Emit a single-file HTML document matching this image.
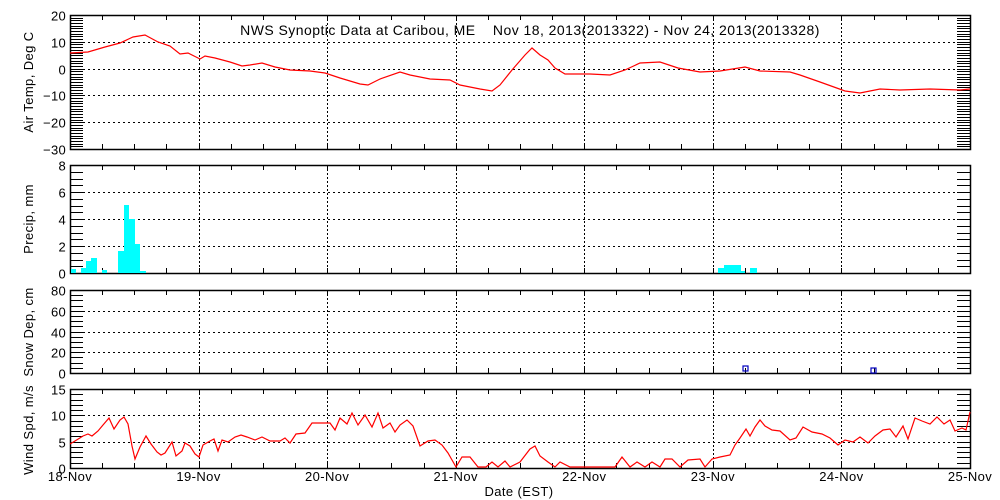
<!DOCTYPE html>
<html><head><meta charset="utf-8"><style>
html,body{margin:0;padding:0;background:#fff;}
svg{display:block;font-family:"Liberation Sans",sans-serif;}
text{fill:#000;}
</style></head><body>
<svg id="s" width="1000" height="500" viewBox="0 0 1000 500" xmlns="http://www.w3.org/2000/svg">
<g id="ax"></g>
<g fill="#00ffff">
<rect x="71" y="269" width="5" height="4"/>
<rect x="81" y="268" width="5" height="5"/>
<rect x="86" y="261" width="5" height="12"/>
<rect x="91" y="258" width="6" height="15"/>
<rect x="102" y="270" width="5" height="3"/>
<rect x="118" y="251" width="6" height="22"/>
<rect x="124" y="205" width="5" height="68"/>
<rect x="129" y="219" width="6" height="54"/>
<rect x="135" y="244" width="5" height="29"/>
<rect x="140" y="271" width="6" height="2"/>
<rect x="718" y="268" width="6" height="5"/>
<rect x="724" y="265" width="17" height="8"/>
<rect x="741" y="271" width="4" height="2"/>
<rect x="750" y="268" width="7" height="5"/>
</g>
<polyline fill="none" stroke="#ff0000" stroke-width="1.2" points="70,53 88,52 105,47 120,43 133,37 145,35 158,42 170,46 180,54 188,53 200,59 205,56 215,58 230,62 242,66 250,65 262,63 275,67 290,70 310,71 325,73 340,78 360,84 368,85 380,79 400,72 410,75 430,79 450,80 460,85 480,89 492,91 500,85 512,70 525,55 532,48 540,55 548,60 555,68 565,74 590,74 610,75 625,70 640,63 660,62 678,68 700,72 720,71 745,67 760,71 790,72 800,75 820,82 845,91 860,93 880,89 900,90 930,89 960,90 970,89"/>
<polyline fill="none" stroke="#ff0000" stroke-width="1.2" points="70,444 75,441 83,436 88,434 92,436 98,431 103,425 109,418 114,429 120,420 124,417 128,424 132,446 135,459 140,447 146,436 151,444 157,452 161,455 165,453 172,442 176,456 182,451 185,443 190,446 195,454 199,457 203,445 210,441 214,439 218,451 222,440 228,442 235,437 241,435 247,437 255,440 262,437 270,441 280,441 285,438 290,443 296,434 305,433 312,423 320,423 330,423 335,430 340,418 347,424 352,413 358,425 365,415 372,427 378,413 383,428 390,423 395,432 400,425 407,420 413,426 420,446 428,441 435,440 442,445 448,453 456,467 462,457 470,457 478,467 486,467 492,462 498,467 505,461 510,467 520,462 530,449 535,446 540,456 548,462 555,467 560,462 570,467 590,467 615,467 622,457 630,467 637,462 645,467 652,462 660,467 665,459 672,459 680,467 688,460 700,459 705,467 712,459 720,457 730,455 735,445 740,438 746,429 750,436 755,427 760,420 765,426 772,430 780,431 790,440 796,438 803,427 812,432 822,434 830,438 838,445 845,440 853,442 860,437 868,443 875,436 883,430 890,429 896,437 903,426 908,439 915,418 922,421 930,424 937,417 944,424 950,420 955,431 962,428 966,430 970,412"/>
<rect x="743" y="366" width="5" height="5" fill="none" stroke="#0000c0" stroke-width="1.2"/>
<rect x="871" y="368" width="5" height="5" fill="none" stroke="#0000c0" stroke-width="1.2"/>
<text x="530" y="35" font-size="14" letter-spacing="0.45" text-anchor="middle" xml:space="preserve">NWS Synoptic Data at Caribou, ME    Nov 18, 2013(2013322) - Nov 24, 2013(2013328)</text>
<text x="519" y="496" font-size="13" letter-spacing="0.4" text-anchor="middle">Date (EST)</text>
<text transform="translate(33,82) rotate(-90)" font-size="13" letter-spacing="0.4" text-anchor="middle">Air Temp, Deg C</text>
<text transform="translate(33,219) rotate(-90)" font-size="13" letter-spacing="0.4" text-anchor="middle">Precip, mm</text>
<text transform="translate(33,332) rotate(-90)" font-size="13" letter-spacing="0.4" text-anchor="middle">Snow Dep, cm</text>
<text transform="translate(33,430) rotate(-90)" font-size="13" letter-spacing="0.4" text-anchor="middle">Wind Spd, m/s</text>
</svg>
<script>
var NS="http://www.w3.org/2000/svg",g=document.getElementById('ax');
function el(t,a,txt){var e=document.createElementNS(NS,t);for(var k in a)e.setAttribute(k,a[k]);if(txt!=null)e.textContent=txt;g.appendChild(e);return e;}
function L(x1,y1,x2,y2,dash){el('line',{x1:x1,y1:y1,x2:x2,y2:y2,stroke:'#000','stroke-width':1,'stroke-dasharray':dash||'none'});}
var X0=70,X1=970,day=(X1-X0)/7;
var panels=[
 {t:15,b:149,min:-30,max:20,major:10,minor:1},
 {t:165,b:273,min:0,max:8,major:2,minor:0.5},
 {t:290,b:373,min:0,max:80,major:20,minor:5},
 {t:389,b:468,min:0,max:15,major:5,minor:1}
];
panels.forEach(function(p,pi){
 function Y(v){return p.b-(v-p.min)/(p.max-p.min)*(p.b-p.t);}
 for(var d=1;d<7;d++){var x=Math.round(X0+d*day)+0.5;L(x,p.t,x,p.b,'2,2');}
 for(var q=1;q<28;q++){var x=Math.round(X0+q*day/4)+0.5;L(x,p.t,x,p.t+5);L(x,p.b,x,p.b-5);}
 for(var v=p.min;v<=p.max+1e-6;v+=p.minor){var y=Math.round(Y(v))+0.5;L(X0,y,X0+13,y);L(X1-13,y,X1,y);}
 for(var v=p.min;v<=p.max+1e-6;v+=p.major){var y=Math.round(Y(v))+0.5;
  if(v>p.min&&v<p.max)L(X0+13,y,X1-13,y,'2,3');
  var s=(v<0?'\u2212':'')+Math.abs(v);
  el('text',{x:X0-4,y:y+5,'font-size':13,'letter-spacing':0.3,'text-anchor':'end'},s);}
 el('rect',{x:X0+0.5,y:p.t+0.5,width:X1-X0,height:p.b-p.t,fill:'none',stroke:'#000','stroke-width':1.5});
});
var days=['18-Nov','19-Nov','20-Nov','21-Nov','22-Nov','23-Nov','24-Nov','25-Nov'];
days.forEach(function(s,i){el('text',{x:X0+i*day,y:481,'font-size':13,'letter-spacing':0.4,'text-anchor':'middle'},s);});
</script>
</body></html>
